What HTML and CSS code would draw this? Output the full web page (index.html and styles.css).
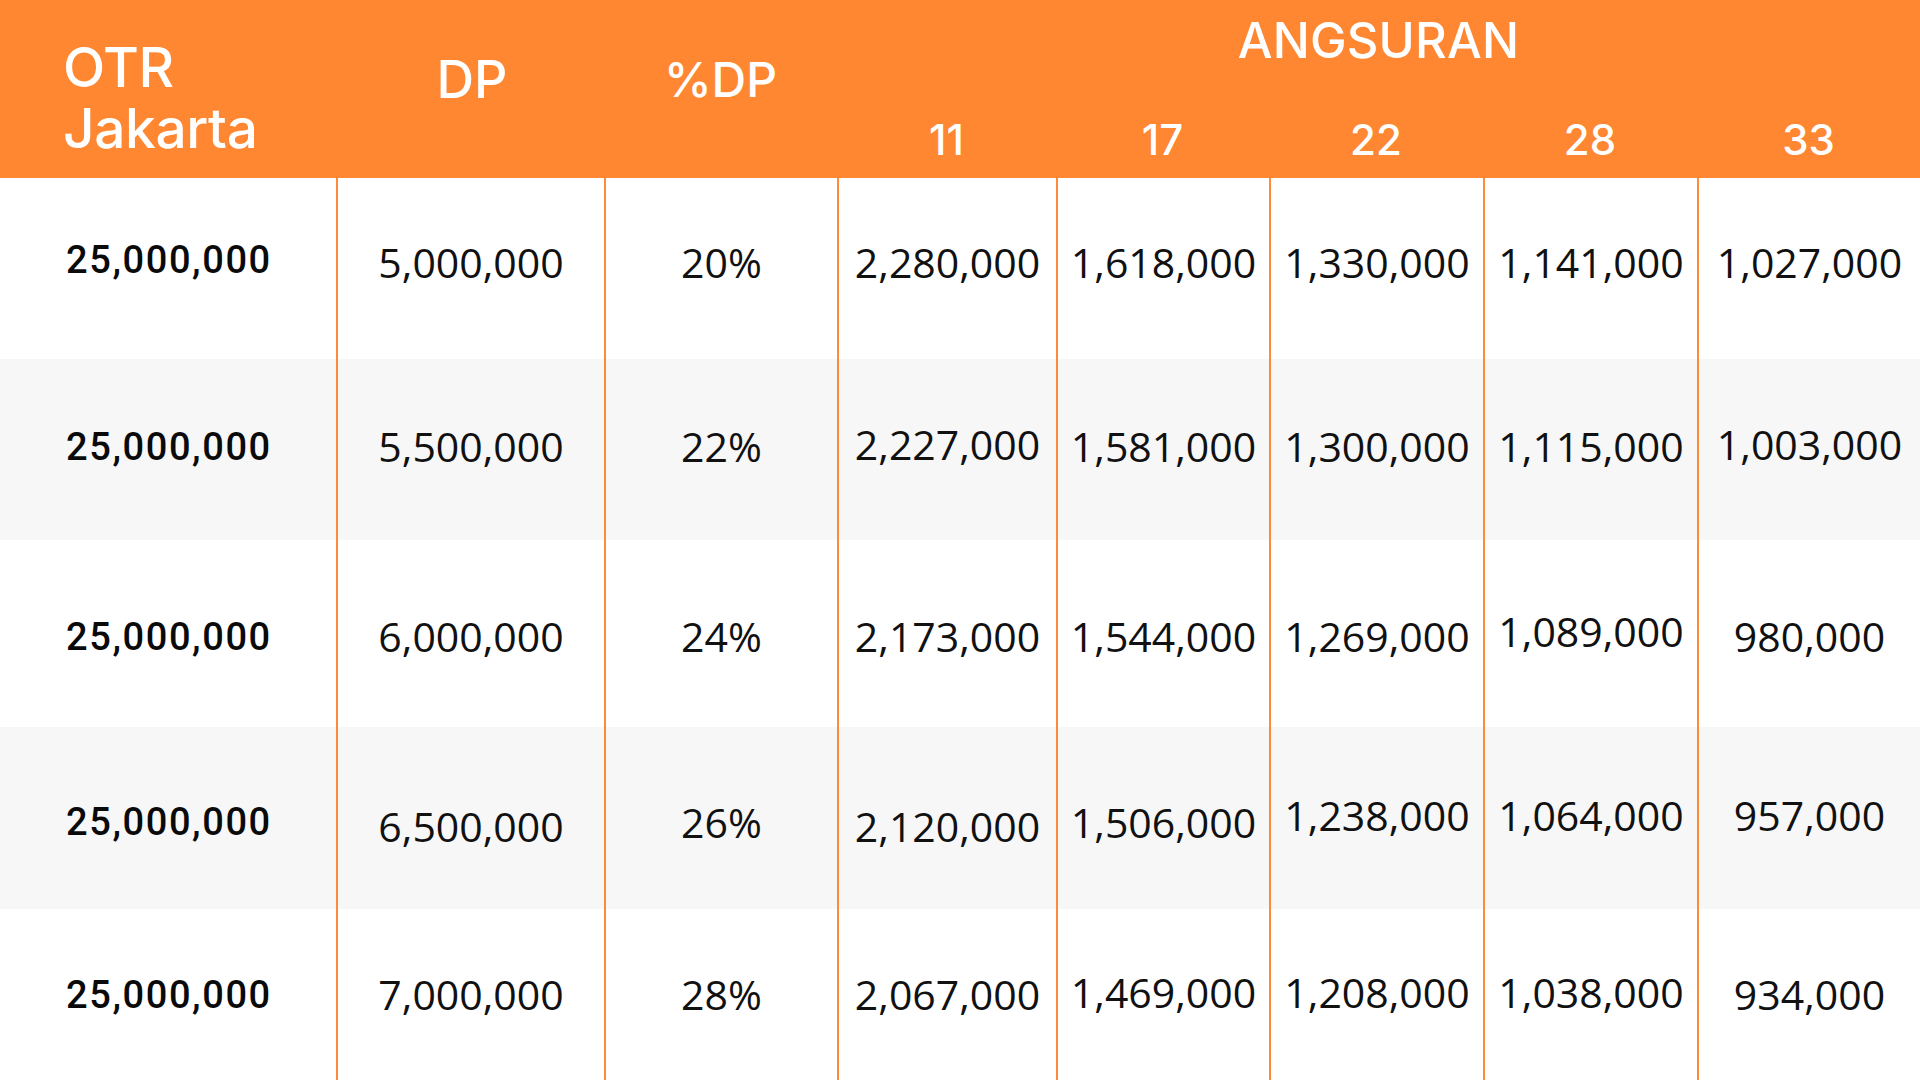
FILE: index.html
```html
<!DOCTYPE html>
<html lang="id">
<head>
<meta charset="utf-8">
<title>Angsuran</title>
<link rel="stylesheet" href="styles.css">
</head>
<body>
<div class="table">
  <div class="head">
    <div class="h-otr">OTR<br>Jakarta</div>
    <div class="h-dp">DP</div>
    <div class="h-pdp">%DP</div>
    <div class="h-ang">ANGSURAN</div>
    <div class="h-num c4">11</div>
    <div class="h-num c5">17</div>
    <div class="h-num c6">22</div>
    <div class="h-num c7">28</div>
    <div class="h-num c8">33</div>
  </div>

  <div class="row r1">
    <div class="cell otr">25,000,000</div>
    <div class="cell">5,000,000</div>
    <div class="cell">20%</div>
    <div class="cell">2,280,000</div>
    <div class="cell">1,618,000</div>
    <div class="cell">1,330,000</div>
    <div class="cell">1,141,000</div>
    <div class="cell">1,027,000</div>
  </div>

  <div class="row r2 alt">
    <div class="cell otr">25,000,000</div>
    <div class="cell">5,500,000</div>
    <div class="cell">22%</div>
    <div class="cell up">2,227,000</div>
    <div class="cell">1,581,000</div>
    <div class="cell">1,300,000</div>
    <div class="cell">1,115,000</div>
    <div class="cell up">1,003,000</div>
  </div>

  <div class="row r3">
    <div class="cell otr">25,000,000</div>
    <div class="cell">6,000,000</div>
    <div class="cell">24%</div>
    <div class="cell">2,173,000</div>
    <div class="cell">1,544,000</div>
    <div class="cell">1,269,000</div>
    <div class="cell up">1,089,000</div>
    <div class="cell">980,000</div>
  </div>

  <div class="row r4 alt">
    <div class="cell otr">25,000,000</div>
    <div class="cell dn">6,500,000</div>
    <div class="cell">26%</div>
    <div class="cell dn">2,120,000</div>
    <div class="cell">1,506,000</div>
    <div class="cell up">1,238,000</div>
    <div class="cell up">1,064,000</div>
    <div class="cell up">957,000</div>
  </div>

  <div class="row r5">
    <div class="cell otr">25,000,000</div>
    <div class="cell">7,000,000</div>
    <div class="cell">28%</div>
    <div class="cell">2,067,000</div>
    <div class="cell up">1,469,000</div>
    <div class="cell up">1,208,000</div>
    <div class="cell up">1,038,000</div>
    <div class="cell">934,000</div>
  </div>
</div>
</body>
</html>
```

FILE: styles.css
```css
* {
  box-sizing: border-box;
}

html, body {
  margin: 0;
  padding: 0;
  width: 1920px;
  height: 1080px;
  overflow: hidden;
  background: #ffffff;
}

.table {
  width: 1920px;
  height: 1080px;
  display: flex;
  flex-direction: column;
}

.head,
.row {
  display: grid;
  grid-template-columns: 336px 268px 233px 219px 213px 214px 214px 223px;
}

/* ---------- header ---------- */
.head {
  height: 178px;
  grid-template-rows: 80px 98px;
  background: #ff8732;
  color: #ffffff;
  font-family: Inter, "Noto Sans", sans-serif;
  font-weight: 500;
  line-height: 1;
}

.h-otr {
  grid-column: 1;
  grid-row: 1 / 3;
  font-size: 55px;
  line-height: 61px;
  padding: 37px 0 0 63px;
  letter-spacing: -0.4px;
}

.h-dp,
.h-pdp {
  grid-row: 1 / 3;
  display: flex;
  align-items: center;
  justify-content: center;
  padding-bottom: 18px;
  font-size: 52px;
}

.h-dp {
  grid-column: 2;
  padding-left: 4px;
}

.h-pdp {
  grid-column: 3;
  font-size: 48px;
}

.h-ang {
  grid-column: 4 / 9;
  grid-row: 1;
  display: flex;
  align-items: center;
  justify-content: center;
  font-size: 49px;
  letter-spacing: 0.2px;
}

.h-num {
  grid-row: 2;
  display: flex;
  align-items: center;
  justify-content: center;
  padding-top: 21px;
  font-size: 42px;
  font-weight: 500;
}

.c4 { grid-column: 4; }
.c5 { grid-column: 5; }
.c6 { grid-column: 6; }
.c7 { grid-column: 7; }
.c8 { grid-column: 8; }

/* ---------- body ---------- */
.row {
  background: #ffffff;
}

.row.alt {
  background: #f7f7f7;
}

.r1 { height: 181px; }
.r2 { height: 181px; }
.r3 { height: 187px; }
.r4 { height: 182px; }
.r5 { height: 171px; }

.cell {
  display: flex;
  align-items: center;
  justify-content: center;
  font-family: "Open Sans", "Noto Sans", sans-serif;
  font-size: 41px;
  line-height: 1;
  color: #111111;
  border-left: 2px solid #ff8a3a;
}

.r1 .cell { padding-bottom: 12px; }
.r2 .cell { padding-bottom: 6px; }
.r3 .cell { padding-top: 6px; }
.r4 .cell { padding-top: 8px; }

.r1 .cell.otr { padding-bottom: 18px; }

.cell.up { padding-bottom: 5px; }
.r2 .cell.up { padding-bottom: 11px; }
.r3 .cell.up { padding-top: 0; }
.r4 .cell.up { padding-top: 0; }
.r4 .cell.dn { padding-top: 16px; }

.cell.otr {
  border-left: none;
  justify-content: flex-start;
  padding-left: 66px;
  font-family: Roboto, "Liberation Sans", sans-serif;
  font-weight: 500;
  font-size: 38px;
  letter-spacing: 1.6px;
  color: #0a0a0a;
}
```
